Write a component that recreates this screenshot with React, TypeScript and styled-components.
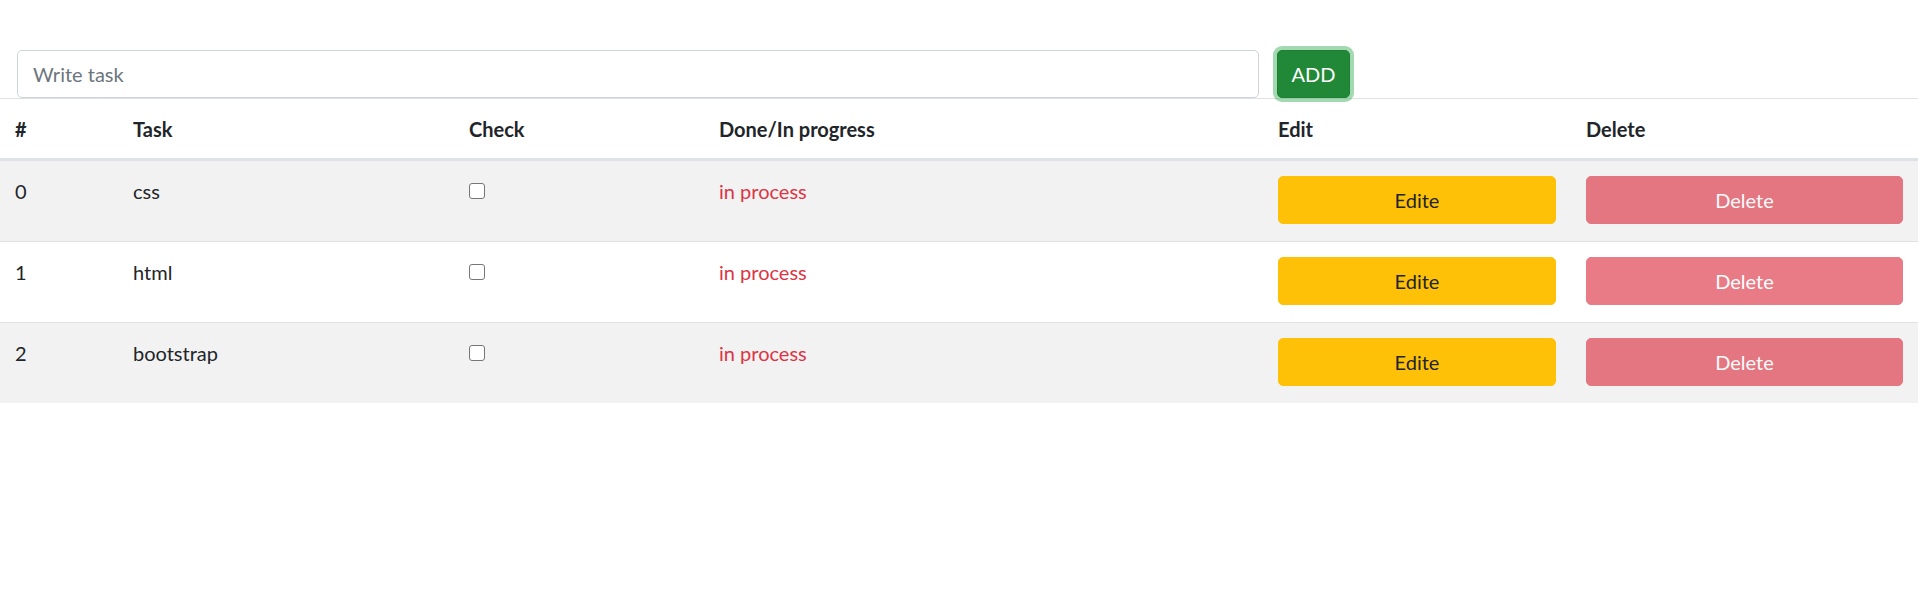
import React from "react";
import styled, { createGlobalStyle } from "styled-components";

const FONT = `Lato, "Open Sans", "Liberation Sans", sans-serif`;

const GlobalStyle = createGlobalStyle`
  html, body {
    margin: 0;
    padding: 0;
    background: #ffffff;
  }
  body {
    font-family: ${FONT};
    font-size: 20px;
    line-height: 30px;
    color: #212529;
  }
  * { box-sizing: border-box; }
`;

const Page = styled.div`
  width: 1918px;
`;

const TaskForm = styled.form`
  display: flex;
  align-items: center;
  gap: 18px;
  padding: 50px 0 0 17px;
`;

const TaskInput = styled.input`
  flex: none;
  width: 1242px;
  height: 48px;
  padding: 0 15px;
  border: 1px solid #ced4da;
  border-radius: 5px;
  font-family: ${FONT};
  font-size: 20px;
  color: #495057;
  background: #fff;
  outline: none;
  &::placeholder {
    color: #6c757d;
  }
`;

const AddButton = styled.button`
  position: relative;
  z-index: 1;
  width: 73px;
  height: 48px;
  padding: 0;
  border: 1px solid #1e7e34;
  border-radius: 5px;
  background: #218838;
  color: #ffffff;
  font-family: ${FONT};
  font-size: 20px;
  box-shadow: 0 0 0 4px rgba(72, 180, 97, 0.5);
  cursor: pointer;
`;

const Table = styled.table`
  width: 100%;
  border-collapse: collapse;
  table-layout: fixed;
`;

const HeadCell = styled.th`
  text-align: left;
  font-weight: 700;
  line-height: 30px;
  padding: 15px 15px 14px;
  border-top: 1px solid #dee2e6;
  border-bottom: 3px solid #dee2e6;
`;

const Row = styled.tr`
  &:nth-of-type(odd) {
    background: #f2f2f2;
  }
`;

const Cell = styled.td`
  vertical-align: top;
  line-height: 30px;
  padding: 15px 15px 17px;
  border-top: 1px solid #dee2e6;
`;

const Check = styled.input`
  appearance: none;
  display: block;
  width: 16px;
  height: 16px;
  margin: 7px 0 0;
  border: 1px solid #767676;
  border-radius: 3px;
  background: #ffffff;
`;

const Status = styled.span`
  color: #dc3545;
`;

const ActionButton = styled.button<{ $variant: "warning" | "danger" }>`
  display: block;
  width: 100%;
  height: 48px;
  border-radius: 5px;
  font-family: ${FONT};
  font-size: 20px;
  border: 1px solid ${(p) => (p.$variant === "warning" ? "#ffc107" : "#dc3545")};
  background: ${(p) => (p.$variant === "warning" ? "#ffc107" : "#dc3545")};
  color: ${(p) => (p.$variant === "warning" ? "#212529" : "#ffffff")};
  opacity: ${(p) => (p.$variant === "danger" ? 0.65 : 1)};
`;

const columns = [
  { label: "#", width: 118 },
  { label: "Task", width: 336 },
  { label: "Check", width: 250 },
  { label: "Done/In progress", width: 559 },
  { label: "Edit", width: 308 },
  { label: "Delete", width: 347 },
];

const tasks = ["css", "html", "bootstrap"];

export default function App() {
  return (
    <Page>
      <GlobalStyle />
      <TaskForm onSubmit={(e) => e.preventDefault()}>
        <TaskInput placeholder="Write task" />
        <AddButton type="submit">ADD</AddButton>
      </TaskForm>
      <Table>
        <colgroup>
          {columns.map((c) => (
            <col key={c.label} style={{ width: c.width }} />
          ))}
        </colgroup>
        <thead>
          <tr>
            {columns.map((c) => (
              <HeadCell key={c.label}>{c.label}</HeadCell>
            ))}
          </tr>
        </thead>
        <tbody>
          {tasks.map((t, i) => (
            <Row key={t}>
              <Cell>{i}</Cell>
              <Cell>{t}</Cell>
              <Cell>
                <Check type="checkbox" />
              </Cell>
              <Cell>
                <Status>in process</Status>
              </Cell>
              <Cell>
                <ActionButton $variant="warning">Edite</ActionButton>
              </Cell>
              <Cell>
                <ActionButton $variant="danger">Delete</ActionButton>
              </Cell>
            </Row>
          ))}
        </tbody>
      </Table>
    </Page>
  );
}
